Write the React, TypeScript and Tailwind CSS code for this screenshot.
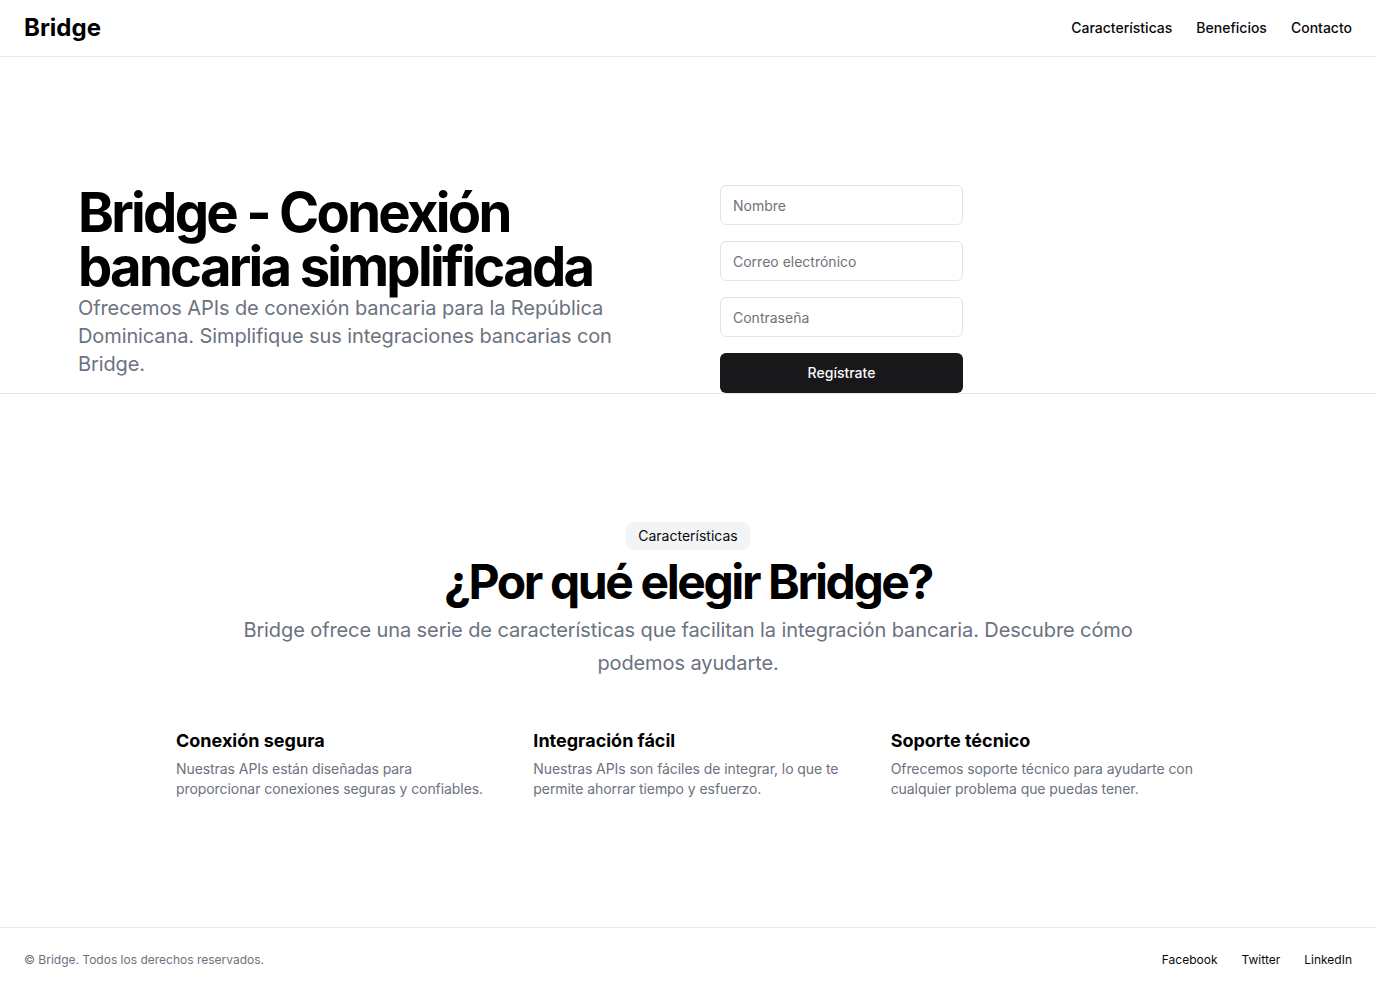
import React from "react";

export default function App() {
  return (
    <div className="flex h-[992px] flex-col bg-white font-['Inter',sans-serif] text-[#09090b]">
      <header className="flex h-14 shrink-0 items-center px-6">
        <a className="text-2xl font-bold text-black">Bridge</a>
        <nav className="ml-auto flex gap-6">
          <a className="text-sm font-medium">Características</a>
          <a className="text-sm font-medium">Beneficios</a>
          <a className="text-sm font-medium">Contacto</a>
        </nav>
      </header>
      <main className="flex-1 min-h-0 overflow-hidden">
        <section className="w-full border-y border-[#e5e7eb] pt-32">
          <div className="px-6">
            <div className="mx-auto grid max-w-[1300px] grid-cols-2 gap-16 px-10">
              <div>
                <h1 className="text-[3.4rem] font-bold leading-none tracking-tighter text-black">
                  Bridge - Conexión bancaria simplificada
                </h1>
                <p className="max-w-[600px] text-xl tracking-[-0.005em] text-[#6b7280]">
                  Ofrecemos APIs de conexión bancaria para la República Dominicana. Simplifique sus integraciones
                  bancarias con Bridge.
                </p>
              </div>
              <form className="flex w-[243px] flex-col gap-4">
                <input
                  className="h-10 w-full rounded-md border border-[#e4e4e7] bg-white px-3 py-2 text-sm placeholder:text-[#71717a]"
                  placeholder="Nombre"
                />
                <input
                  className="h-10 w-full rounded-md border border-[#e4e4e7] bg-white px-3 py-2 text-sm placeholder:text-[#71717a]"
                  placeholder="Correo electrónico"
                />
                <input
                  type="password"
                  className="h-10 w-full rounded-md border border-[#e4e4e7] bg-white px-3 py-2 text-sm placeholder:text-[#71717a]"
                  placeholder="Contraseña"
                />
                <button
                  type="button"
                  className="h-10 w-full rounded-md bg-[#18181b] text-sm font-medium text-[#fafafa]"
                >
                  Regístrate
                </button>
              </form>
            </div>
          </div>
        </section>
        <section className="w-full pt-32 pb-32">
          <div className="px-6">
            <div className="flex flex-col items-center justify-center text-center">
              <div className="flex flex-col items-center gap-2">
                <div className="rounded-lg bg-[#f3f4f6] px-3 py-1 text-sm">Características</div>
                <h2 className="text-5xl font-bold leading-none tracking-tighter text-black">¿Por qué elegir Bridge?</h2>
                <p className="max-w-[900px] text-xl leading-relaxed tracking-[-0.005em] text-[#6b7280]">
                  Bridge ofrece una serie de características que facilitan la integración bancaria. Descubre cómo
                  podemos ayudarte.
                </p>
              </div>
            </div>
            <div className="mx-auto grid max-w-5xl grid-cols-3 items-start gap-12 pt-12">
              <div className="grid gap-1">
                <h3 className="text-lg font-bold leading-7 text-black">Conexión segura</h3>
                <p className="text-sm tracking-[-0.005em] text-[#6b7280]">
                  Nuestras APIs están diseñadas para proporcionar conexiones seguras y confiables.
                </p>
              </div>
              <div className="grid gap-1">
                <h3 className="text-lg font-bold leading-7 text-black">Integración fácil</h3>
                <p className="text-sm tracking-[-0.005em] text-[#6b7280]">
                  Nuestras APIs son fáciles de integrar, lo que te permite ahorrar tiempo y esfuerzo.
                </p>
              </div>
              <div className="grid gap-1">
                <h3 className="text-lg font-bold leading-7 text-black">Soporte técnico</h3>
                <p className="text-sm tracking-[-0.005em] text-[#6b7280]">
                  Ofrecemos soporte técnico para ayudarte con cualquier problema que puedas tener.
                </p>
              </div>
            </div>
          </div>
        </section>
      </main>
      <footer className="flex w-full shrink-0 flex-row items-center gap-2 border-t border-[#e5e7eb] px-6 py-6">
        <p className="text-xs text-[#6b7280]">© Bridge. Todos los derechos reservados.</p>
        <nav className="ml-auto flex gap-6">
          <a className="text-xs">Facebook</a>
          <a className="text-xs">Twitter</a>
          <a className="text-xs">LinkedIn</a>
        </nav>
      </footer>
    </div>
  );
}
